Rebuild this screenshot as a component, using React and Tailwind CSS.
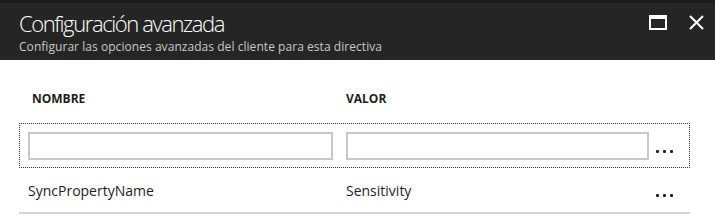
const font = { fontFamily: '"Open Sans", "Noto Sans", sans-serif' };

const Dots = () => (
  <div className="flex items-center gap-[4px]">
    <span className="w-[3px] h-[3px] rounded-[1px] bg-[#222]"></span>
    <span className="w-[3px] h-[3px] rounded-[1px] bg-[#222]"></span>
    <span className="w-[3px] h-[3px] rounded-[1px] bg-[#222]"></span>
  </div>
);

const App = () => {
  return (
    <div className="w-[715px] h-[220px] bg-white overflow-hidden" style={font}>
      <div className="h-[3px] bg-[#1b1b1b]"></div>
      <div className="h-[57px] bg-[#252526] flex justify-between pl-[19px] pr-[11px]">
        <div className="flex flex-col">
          <div className="text-[22px] leading-[26px] text-white mt-[7px] tracking-[-1.4px] font-light">Configuración avanzada</div>
          <div className="text-[12px] leading-[16px] text-[#c8c8c8] mt-[3px] tracking-[0.05px]">Configurar las opciones avanzadas del cliente para esta directiva</div>
        </div>
        <div className="flex items-start gap-[22px] pt-[12px]">
          <div className="w-[18px] h-[15px] border-2 border-t-[4px] border-white"></div>
          <svg width="15" height="15" viewBox="0 0 15 15">
            <path d="M1 1 L14 14 M14 1 L1 14" stroke="white" strokeWidth="2" />
          </svg>
        </div>
      </div>
      <div className="pl-[19px] pr-[25px]">
        <div className="flex h-[63px] items-center text-[12px] font-bold text-[#1e1e1e] pt-[14px]">
          <div className="w-[327px] pl-[13px]">NOMBRE</div>
          <div>VALOR</div>
        </div>
        <div className="border border-dotted border-[#333] h-[45px] flex items-center pl-[8px]">
          <input className="w-[305px] h-[28px] border-2 border-[#c8c8c8] outline-none" />
          <input className="w-[303px] h-[28px] border-2 border-[#c8c8c8] outline-none ml-[13px]" />
          <div className="ml-[7px] mt-[12px]"><Dots /></div>
        </div>
        <div className="flex items-center h-[46px] border-b-2 border-[#d4d4d4] text-[14px] text-[#1e1e1e] pl-[9px]">
          <div className="w-[318px]">SyncPropertyName</div>
          <div className="w-[310px]">Sensitivity</div>
          <div className="mt-[10px]"><Dots /></div>
        </div>
      </div>
    </div>
  );
};

export default App;
